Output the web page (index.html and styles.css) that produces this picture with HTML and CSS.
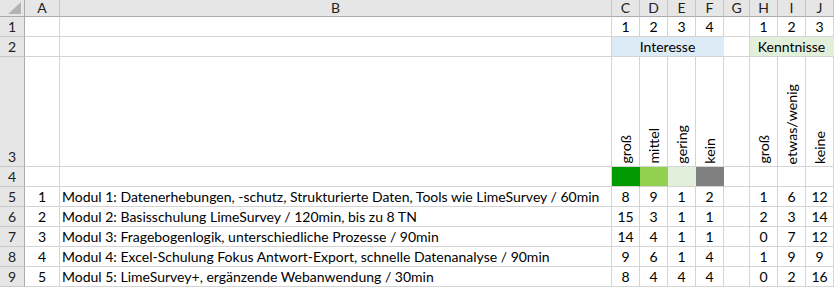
FILE: index.html
```html
<!DOCTYPE html>
<html lang="de">
<head>
<meta charset="utf-8">
<title>Tabelle</title>
<link rel="stylesheet" href="styles.css">
</head>
<body>
<div class="sheet">
  <!-- column headers -->
  <div class="hd corner"><svg width="24" height="16" viewBox="0 0 24 16"><polygon points="21,2 21,14 8,14" fill="#b4b4b4"/></svg></div>
  <div class="hd">A</div>
  <div class="hd">B</div>
  <div class="hd">C</div>
  <div class="hd">D</div>
  <div class="hd">E</div>
  <div class="hd">F</div>
  <div class="hd">G</div>
  <div class="hd">H</div>
  <div class="hd">I</div>
  <div class="hd">J</div>

  <!-- row 1 -->
  <div class="rh">1</div>
  <div class="c"></div>
  <div class="c"></div>
  <div class="c num">1</div>
  <div class="c num">2</div>
  <div class="c num">3</div>
  <div class="c num">4</div>
  <div class="c"></div>
  <div class="c num">1</div>
  <div class="c num">2</div>
  <div class="c num">3</div>

  <!-- row 2 -->
  <div class="rh">2</div>
  <div class="c"></div>
  <div class="c"></div>
  <div class="c num span4 blue">Interesse</div>
  <div class="c"></div>
  <div class="c num span3 mint">Kenntnisse</div>

  <!-- row 3 -->
  <div class="rh">3</div>
  <div class="c"></div>
  <div class="c"></div>
  <div class="c vert"><span>groß</span></div>
  <div class="c vert"><span>mittel</span></div>
  <div class="c vert"><span>gering</span></div>
  <div class="c vert"><span>kein</span></div>
  <div class="c"></div>
  <div class="c vert"><span>groß</span></div>
  <div class="c vert"><span>etwas/wenig</span></div>
  <div class="c vert"><span>keine</span></div>

  <!-- row 4 -->
  <div class="rh">4</div>
  <div class="c"></div>
  <div class="c"></div>
  <div class="c f-dark"></div>
  <div class="c f-light"></div>
  <div class="c f-pale"></div>
  <div class="c f-gray"></div>
  <div class="c"></div>
  <div class="c"></div>
  <div class="c"></div>
  <div class="c"></div>

  <!-- row 5 -->
  <div class="rh">5</div>
  <div class="c num">1</div>
  <div class="c txt">Modul 1: Datenerhebungen, -schutz, Strukturierte Daten, Tools wie LimeSurvey / 60min</div>
  <div class="c num">8</div>
  <div class="c num">9</div>
  <div class="c num">1</div>
  <div class="c num">2</div>
  <div class="c"></div>
  <div class="c num">1</div>
  <div class="c num">6</div>
  <div class="c num">12</div>

  <!-- row 6 -->
  <div class="rh">6</div>
  <div class="c num">2</div>
  <div class="c txt">Modul 2: Basisschulung LimeSurvey / 120min, bis zu 8 TN</div>
  <div class="c num">15</div>
  <div class="c num">3</div>
  <div class="c num">1</div>
  <div class="c num">1</div>
  <div class="c"></div>
  <div class="c num">2</div>
  <div class="c num">3</div>
  <div class="c num">14</div>

  <!-- row 7 -->
  <div class="rh">7</div>
  <div class="c num">3</div>
  <div class="c txt">Modul 3: Fragebogenlogik, unterschiedliche Prozesse / 90min</div>
  <div class="c num">14</div>
  <div class="c num">4</div>
  <div class="c num">1</div>
  <div class="c num">1</div>
  <div class="c"></div>
  <div class="c num">0</div>
  <div class="c num">7</div>
  <div class="c num">12</div>

  <!-- row 8 -->
  <div class="rh">8</div>
  <div class="c num">4</div>
  <div class="c txt">Modul 4: Excel-Schulung Fokus Antwort-Export, schnelle Datenanalyse / 90min</div>
  <div class="c num">9</div>
  <div class="c num">6</div>
  <div class="c num">1</div>
  <div class="c num">4</div>
  <div class="c"></div>
  <div class="c num">1</div>
  <div class="c num">9</div>
  <div class="c num">9</div>

  <!-- row 9 -->
  <div class="rh">9</div>
  <div class="c num">5</div>
  <div class="c txt">Modul 5: LimeSurvey+, ergänzende Webanwendung / 30min</div>
  <div class="c num">8</div>
  <div class="c num">4</div>
  <div class="c num">4</div>
  <div class="c num">4</div>
  <div class="c"></div>
  <div class="c num">0</div>
  <div class="c num">2</div>
  <div class="c num">16</div>
</div>
</body>
</html>
```

FILE: styles.css
```css
html, body {
  margin: 0;
  padding: 0;
  background: #ffffff;
}

.sheet {
  display: grid;
  grid-template-columns: 25px 35px 552px 28px 28px 28px 28px 26px 28px 28px 28px;
  grid-template-rows: 17px 20px 20px 110px 20px 20px 20px 20px 20px 20px;
  font-family: Lato, "Open Sans", sans-serif;
  font-size: 14px;
  color: #000;
}

.sheet > div {
  box-sizing: border-box;
  overflow: hidden;
  white-space: nowrap;
}

.hd {
  background: #e6e6e6;
  border-right: 1px solid #c4c4c4;
  border-bottom: 1px solid #ababab;
  display: flex;
  align-items: center;
  justify-content: center;
  color: #222;
  font-size: 14px;
  line-height: 16px;
}

.hd.corner {
  border-right: 1px solid #ababab;
  align-items: stretch;
  justify-content: stretch;
}

.rh {
  background: #e6e6e6;
  border-right: 1px solid #ababab;
  border-bottom: 1px solid #c8c8c8;
  display: flex;
  align-items: flex-end;
  justify-content: center;
  color: #222;
  font-size: 14px;
  line-height: 17px;
  padding-bottom: 1px;
}

.c {
  border-right: 1px solid #d4d4d4;
  border-bottom: 1px solid #d4d4d4;
  display: flex;
  align-items: flex-end;
  line-height: 17px;
  padding-bottom: 1px;
}

.num {
  justify-content: center;
}

.txt {
  padding-left: 2px;
}

.span4 {
  grid-column: span 4;
}

.span3 {
  grid-column: span 3;
}

.blue {
  background: #ddebf7;
  border-right-color: #ddebf7;
}

.mint {
  background: #e2efda;
  border-right-color: #e2efda;
}

.vert {
  justify-content: center;
  padding-bottom: 2px;
}

.vert span {
  writing-mode: vertical-rl;
  transform: rotate(180deg);
  line-height: 17px;
  font-size: 14.2px;
}

.f-dark {
  background: #009a00;
  border-right-color: #009a00;
}

.f-light {
  background: #92d050;
  border-right-color: #92d050;
}

.f-pale {
  background: #e2efda;
  border-right-color: #e2efda;
}

.f-gray {
  background: #808080;
  border-right-color: #808080;
}
```
